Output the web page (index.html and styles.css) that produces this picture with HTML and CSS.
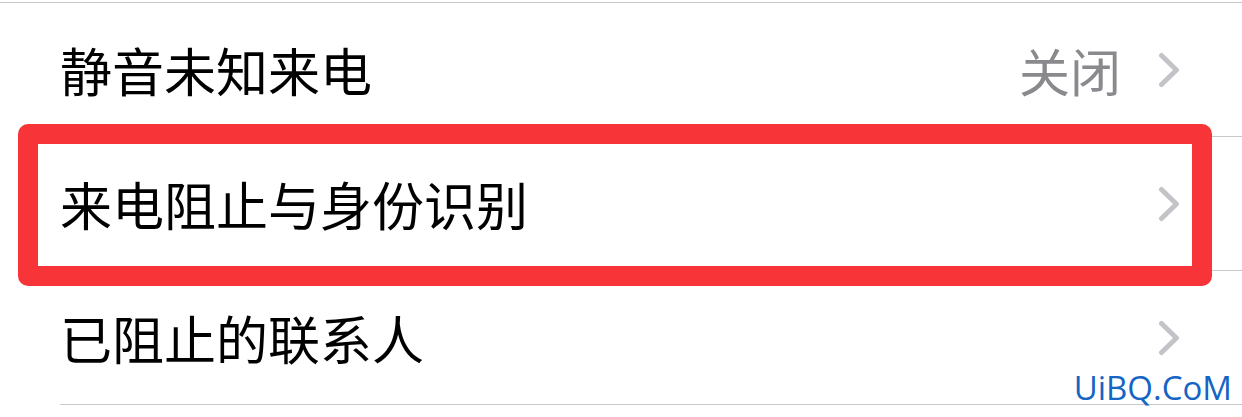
FILE: index.html
```html
<!DOCTYPE html>
<html lang="zh-CN">
<head>
<meta charset="utf-8">
<title>电话设置</title>
<link rel="stylesheet" href="styles.css">
</head>
<body>
<div class="screen">
  <ul class="list">
    <li class="row">
      <div class="row-body">
        <span class="label">静音未知来电</span>
        <span class="value">关闭</span>
        <svg class="chev" viewBox="0 0 22 36" width="22" height="36"><polyline points="3.5,3.5 18.5,18 3.5,32.5"/></svg>
      </div>
    </li>
    <li class="row">
      <div class="row-body">
        <span class="label">来电阻止与身份识别</span>
        <svg class="chev" viewBox="0 0 22 36" width="22" height="36"><polyline points="3.5,3.5 18.5,18 3.5,32.5"/></svg>
      </div>
    </li>
    <li class="row">
      <div class="row-body">
        <span class="label">已阻止的联系人</span>
        <svg class="chev" viewBox="0 0 22 36" width="22" height="36"><polyline points="3.5,3.5 18.5,18 3.5,32.5"/></svg>
      </div>
    </li>
  </ul>
  <div class="highlight"></div>
  <div class="watermark">UiBQ.CoM</div>
</div>
</body>
</html>
```

FILE: styles.css
```css
html, body {
  margin: 0;
  padding: 0;
  background: #ffffff;
}

.screen {
  position: relative;
  width: 1242px;
  height: 417px;
  overflow: hidden;
  background: #ffffff;
  font-family: "Noto Sans CJK SC", "Noto Sans", sans-serif;
}

.list {
  list-style: none;
  margin: 2px 0 0 0;
  padding: 0;
  border-top: 1px solid #c8c7cc;
}

.row {
  padding-left: 60px;
}

.row-body {
  height: 133px;
  display: flex;
  align-items: center;
  padding-right: 62px;
  border-bottom: 1px solid #c8c7cc;
}

.label {
  flex: 1;
  font-size: 52px;
  line-height: 1;
  color: #000000;
  padding-top: 1px;
}

.value {
  font-size: 51px;
  line-height: 1;
  color: #8a8a8e;
  margin-right: 37px;
  padding-top: 1px;
}

.chev {
  display: block;
  fill: none;
  stroke: #c4c4c8;
  stroke-width: 5;
  stroke-linecap: round;
  stroke-linejoin: round;
}

.highlight {
  position: absolute;
  left: 18px;
  top: 124px;
  width: 1194px;
  height: 162px;
  box-sizing: border-box;
  border: 20px solid #f73538;
  border-radius: 10px;
}

.watermark {
  position: absolute;
  right: 10px;
  top: 371px;
  font-family: "Open Sans", "Noto Sans", sans-serif;
  font-size: 33px;
  line-height: 1;
  color: #1565c4;
}
```
